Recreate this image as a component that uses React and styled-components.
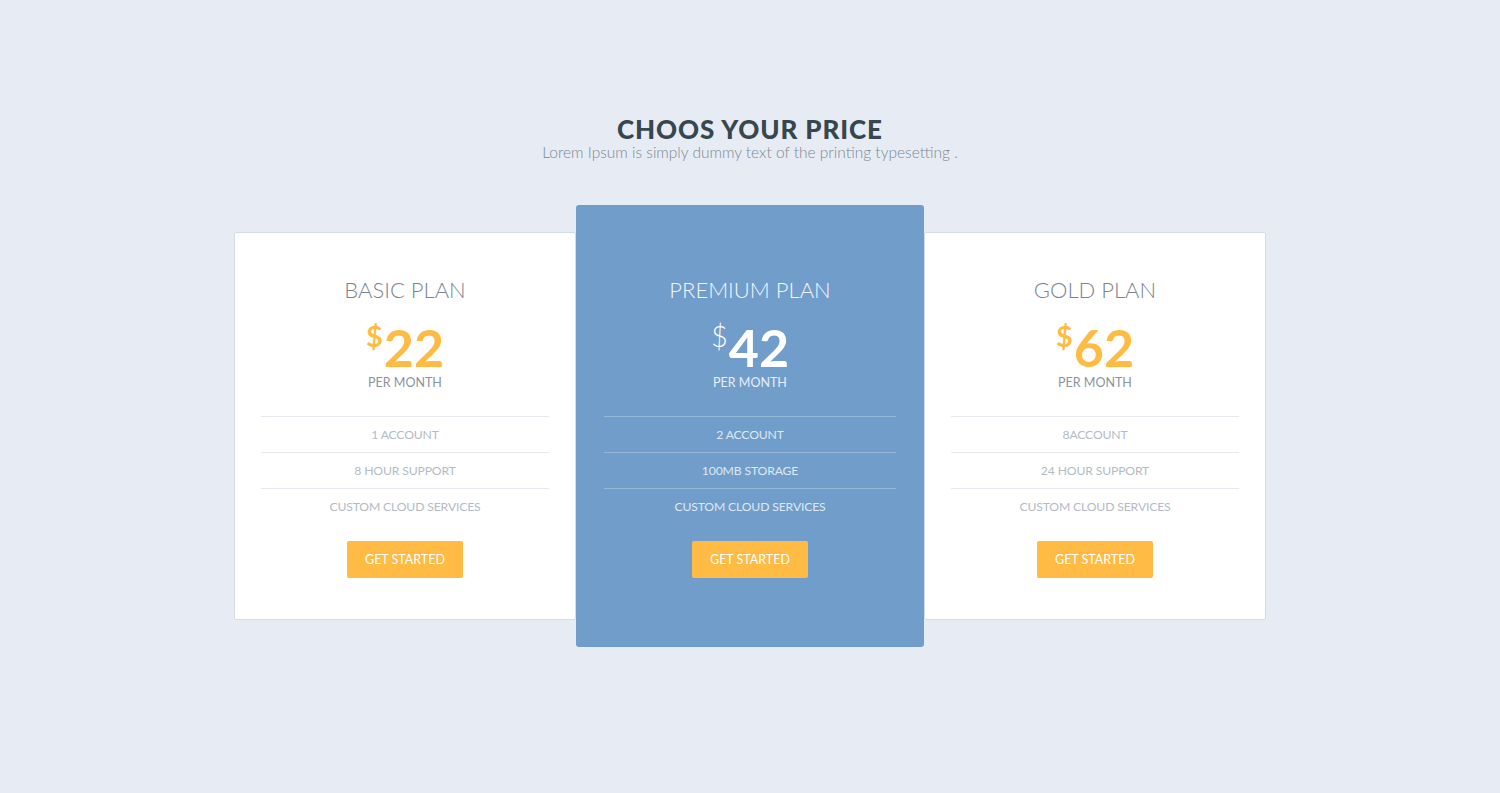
import React from 'react';
import styled, { createGlobalStyle } from 'styled-components';

const plans = [
    { name: 'BASIC PLAN', price: 22, features: ['1 ACCOUNT', '8 HOUR SUPPORT', 'CUSTOM CLOUD SERVICES'] },
    { name: 'PREMIUM PLAN', price: 42, features: ['2 ACCOUNT', '100MB STORAGE', 'CUSTOM CLOUD SERVICES'], featured: true },
    { name: 'GOLD PLAN', price: 62, features: ['8ACCOUNT', '24 HOUR SUPPORT', 'CUSTOM CLOUD SERVICES'] },
];

const App = () => {
    return (
        <>
            <GlobalStyle />
            <Page>
                <Header>
                    <h1>CHOOS YOUR PRICE</h1>
                    <p>Lorem Ipsum is simply dummy text of the printing typesetting .</p>
                </Header>

                <PlansRow>
                    {plans.map(plan => (
                        <PlanCard key={plan.name} $featured={plan.featured}>
                            <PlanTitle $featured={plan.featured}>{plan.name}</PlanTitle>
                            <Price $featured={plan.featured}>
                                <span className="currency">$</span>{plan.price}
                            </Price>
                            <PerMonth $featured={plan.featured}>PER MONTH</PerMonth>
                            <FeatureList $featured={plan.featured}>
                                {plan.features.map(f => <li key={f}>{f}</li>)}
                            </FeatureList>
                            <StartButton>GET STARTED</StartButton>
                        </PlanCard>
                    ))}
                </PlansRow>
            </Page>
        </>
    );
};

export default App;

const GlobalStyle = createGlobalStyle`
  html, body { margin: 0; padding: 0; background: #e7ecf4; }
  body { font-family: Lato, "Open Sans", sans-serif; }
  * { box-sizing: border-box; }
`;

const Page = styled.div`
  min-height: 793px;
  padding-top: 115px;
  display: flex; flex-direction: column; align-items: center;
`;

const Header = styled.div`
  text-align: center;
  h1 {
      margin: 0; font-size: 26px; line-height: 28px; font-weight: 900;
      color: #36474f; letter-spacing: 0.9px;
  }
  p {
      margin: 0; font-size: 15.5px; line-height: 18px; font-weight: 300;
      color: #7b8893;
  }
`;

const PlansRow = styled.div`
  margin-top: 44px;
  display: flex; align-items: center; justify-content: center;
`;

const PlanCard = styled.div`
  display: flex; flex-direction: column; align-items: center;
  width: ${({ $featured }) => $featured ? '348px' : '342px'};
  padding: ${({ $featured }) => $featured ? '72px 28px 69px' : '44px 26px 41px'};
  background: ${({ $featured }) => $featured ? '#719dca' : '#ffffff'};
  border: ${({ $featured }) => $featured ? 'none' : '1px solid #d6dce5'};
  border-radius: ${({ $featured }) => $featured ? '3px' : '2px'};
  position: relative;
  z-index: ${({ $featured }) => $featured ? 1 : 0};
`;

const PlanTitle = styled.h2`
  margin: 0; font-size: 22px; line-height: 26px; font-weight: 300;
  color: ${({ $featured }) => $featured ? '#f2f6fb' : '#7a8591'};
`;

const Price = styled.div`
  margin-top: 20px;
  font-size: 52px; line-height: 48px; font-weight: 700;
  color: ${({ $featured }) => $featured ? '#ffffff' : '#ffbb43'};
  .currency {
      font-size: 29px; vertical-align: top; line-height: 26px;
      font-weight: ${({ $featured }) => $featured ? 300 : 700};
      margin-right: 1px;
  }
`;

const PerMonth = styled.div`
  margin-top: 4px;
  font-size: 12.5px; line-height: 16px; font-weight: 400;
  color: ${({ $featured }) => $featured ? '#e6eef7' : '#8a94a0'};
`;

const FeatureList = styled.ul`
  list-style: none; margin: 25px 0 0; padding: 0;
  width: 100%;
  li {
      border-top: 1px solid ${({ $featured }) => $featured ? 'rgba(255,255,255,0.28)' : '#e6eaf0'};
      height: 36px; line-height: 35px; text-align: center;
      font-size: 12.2px; font-weight: 400; letter-spacing: -0.15px;
      color: ${({ $featured }) => $featured ? '#dde8f4' : '#b4bbc5'};
  }
`;

const StartButton = styled.button`
  margin-top: 17px;
  width: 116px; height: 37px;
  border: none; border-radius: 2px; cursor: pointer;
  background: #ffbb43; color: #ffffff;
  font-family: Lato, sans-serif; font-size: 12.5px; font-weight: 400;
`;
